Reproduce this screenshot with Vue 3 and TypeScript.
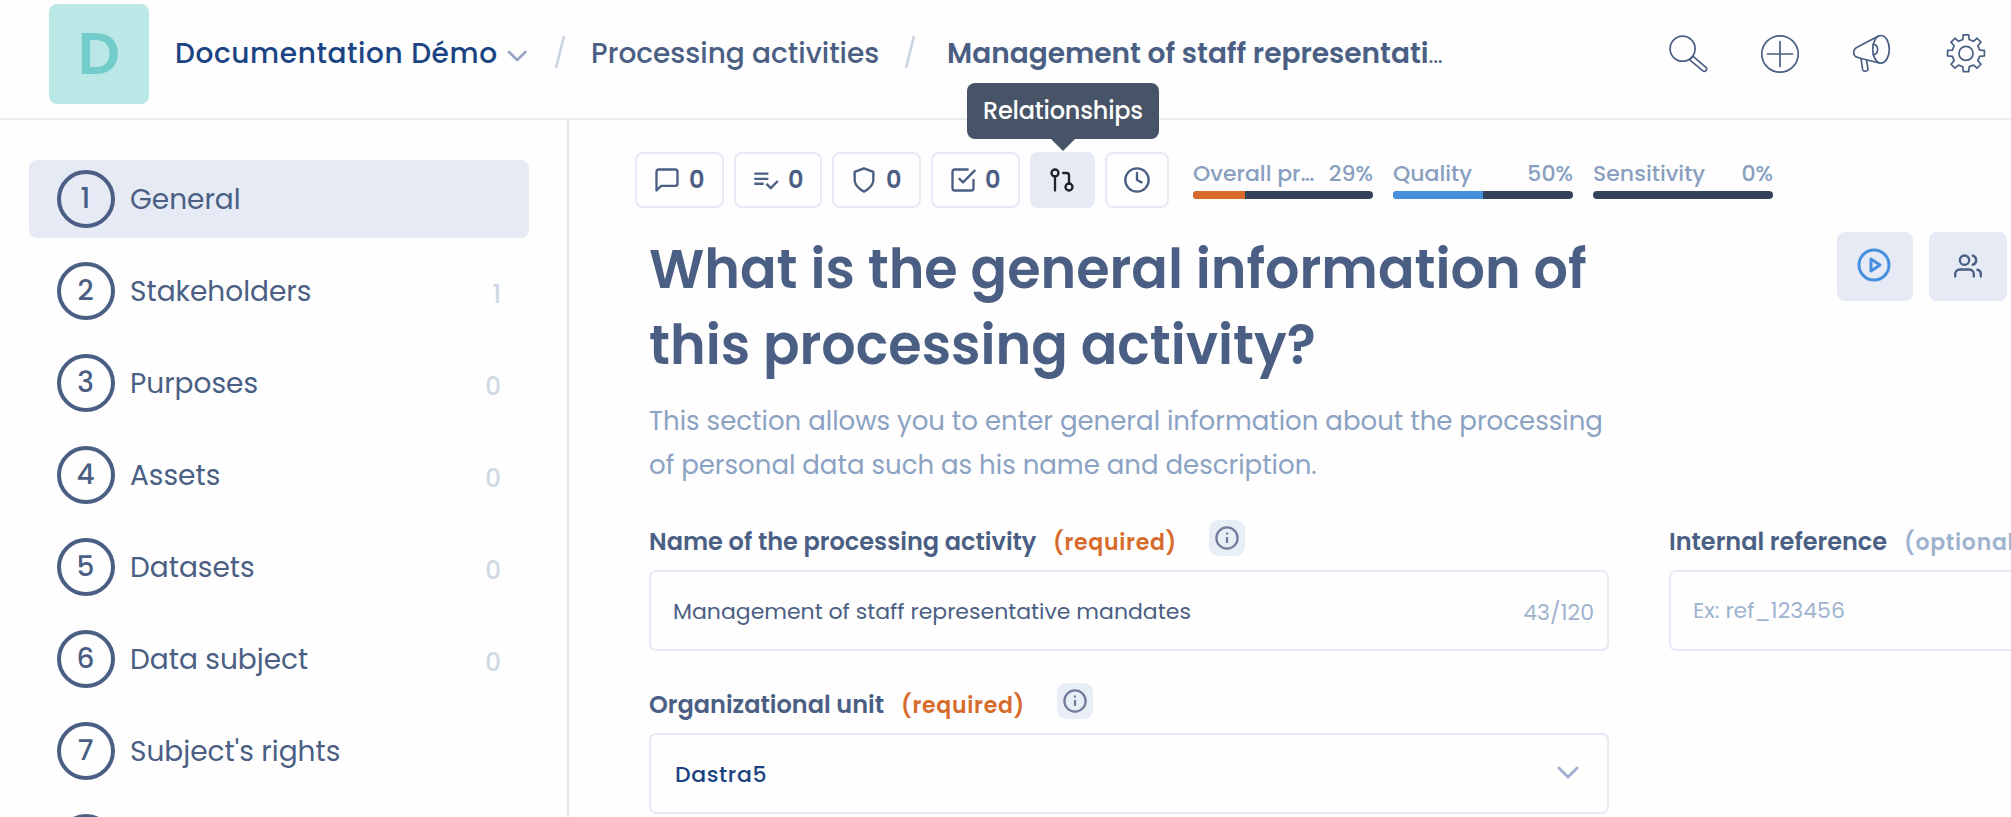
<script setup lang="ts">
interface Step {
  label: string
  count?: number
}

const steps: Step[] = [
  { label: 'General' },
  { label: 'Stakeholders', count: 1 },
  { label: 'Purposes', count: 0 },
  { label: 'Assets', count: 0 },
  { label: 'Datasets', count: 0 },
  { label: 'Data subject', count: 0 },
  { label: "Subject's rights" },
]

const meters = [
  { label: 'Overall pr', clipped: true, value: 29, color: '#d86b2b' },
  { label: 'Quality', clipped: false, value: 50, color: '#458fde' },
  { label: 'Sensitivity', clipped: false, value: 0, color: '#458fde' },
]

// Outline of an eight-toothed cog centred on (20, 19.2)
const cog = Array.from({ length: 8 }, (_, i) =>
  [[14, -13], [18.6, -8.5], [18.6, 8.5], [14, 13]].map(([r, a]) => {
    const t = ((i * 45 + a) * Math.PI) / 180
    return `${(20 + r * Math.sin(t)).toFixed(2)},${(19.2 - r * Math.cos(t)).toFixed(2)}`
  }).join(' '),
).join(' ')
</script>

<template>
  <div class="app">
    <header class="topbar">
      <div class="logo">D</div>
      <span class="crumb workspace">Documentation Démo</span>
      <svg class="caret" width="21" height="12" viewBox="0 0 21 12"><path d="M2 2l8.2 8 8.2-8" /></svg>
      <svg class="slash first" width="12" height="36" viewBox="0 0 12 36"><path d="M10 2L2 34" /></svg>
      <span class="crumb section">Processing activities</span>
      <svg class="slash second" width="12" height="36" viewBox="0 0 12 36"><path d="M10 2L2 34" /></svg>
      <span class="crumb current">Management of staff representati<span class="dots">...</span></span>
      <nav class="tools">
        <svg viewBox="0 0 40 40"><circle cx="14.6" cy="14.7" r="12.5" /><path d="M21.7 25.8l3.5-3.9M23.3 24l-1.6 1.8 13.2 11.1q1.7 1.1 3.1-.3 1.5-1.6-.1-3.2L25.1 22.3" /></svg>
        <svg viewBox="0 0 40 40"><circle cx="20" cy="20" r="18.2" /><path d="M20 7.5v25M7.5 20h25" /></svg>
        <svg viewBox="0 0 40 40"><ellipse cx="29" cy="15.3" rx="8.3" ry="13.8" /><path d="M26.5 2L6.5 12.5C3 14 1.7 16 1.7 18.5c0 3 1.8 4.7 4.8 5.2L27 29M21.3 10.3c5.7.4 5.7 10 0 10.4M9 24.4l1.6 11q.4 1.9 1.9 1.8l2.2-.4q1.5-.4 1.3-1.8l-1.5-9" /></svg>
        <svg class="gear" viewBox="0 0 40 40"><polygon :points="cog" /><circle cx="20" cy="19.4" r="7" /></svg>
      </nav>
    </header>

    <div class="body">
      <aside class="sidebar">
        <div v-for="(s, i) in steps" :key="s.label" class="step" :class="{ active: i === 0 }">
          <span class="number">{{ i + 1 }}</span>
          <span class="label">{{ s.label }}</span>
          <span v-if="s.count !== undefined" class="count">{{ s.count }}</span>
        </div>
        <div class="step"><span class="number"></span></div>
      </aside>

      <main class="main">
        <div class="toolbar">
          <button class="tool"><svg viewBox="0 0 24 24"><path d="M21 15a2 2 0 0 1-2 2H7l-4 4V5a2 2 0 0 1 2-2h14a2 2 0 0 1 2 2z" /></svg>0</button>
          <button class="tool narrow"><svg viewBox="0 0 24 24"><path class="butt" d="M2 6.5h12M2 11h12M2 15.2h8M12.3 15.3l3.8 3.7 6-6.1" /></svg>0</button>
          <button class="tool"><svg viewBox="0 0 24 24"><path d="M12 22s8-4 8-10V5l-8-3-8 3v7c0 6 8 10 8 10z" /></svg>0</button>
          <button class="tool"><svg viewBox="0 0 24 24"><path d="M9 11l3 3L22 4M21 12v7a2 2 0 0 1-2 2H5a2 2 0 0 1-2-2V5a2 2 0 0 1 2-2h11" /></svg>0</button>
          <button class="tool relations">
            <svg viewBox="0 0 24 24"><circle cx="18" cy="18" r="3" /><circle cx="6" cy="6" r="3" /><path d="M13 6h3a2 2 0 0 1 2 2v7M6 9v12" /></svg>
            <span class="tooltip">Relationships</span>
          </button>
          <button class="tool history"><svg viewBox="0 0 24 24"><circle cx="12" cy="12" r="10" /><path d="M12 6v6l4 2" /></svg></button>
          <div class="meters">
            <div v-for="m in meters" :key="m.label" class="meter">
              <div class="meter-text"><span>{{ m.label }}<span v-if="m.clipped" class="clip">...</span></span><span>{{ m.value }}%</span></div>
              <div class="track"><div class="fill" :style="{ width: m.value + '%', background: m.color }"></div></div>
            </div>
          </div>
        </div>

        <div class="intro">
          <h1>What is the general information of<br />this processing activity?</h1>
          <div class="actions">
            <button class="action play"><svg viewBox="0 0 24 24"><circle cx="12" cy="12" r="10" /><path d="M10 8l6 4-6 4z" /></svg></button>
            <button class="action people"><svg viewBox="0 0 24 24"><path d="M17 21v-2a4 4 0 0 0-4-4H5a4 4 0 0 0-4 4v2M23 21v-2a4 4 0 0 0-3-3.87M16 3.13a4 4 0 0 1 0 7.75" /><circle cx="9" cy="7" r="4" /></svg></button>
          </div>
        </div>
        <p class="lead">This section allows you to enter general information about the processing<br />of personal data such as his name and description.</p>

        <div class="fields">
          <div class="field">
            <div class="caption">
              <label class="name">Name of the processing activity</label><span class="required">(required)</span>
              <span class="info"><svg viewBox="0 0 24 24"><circle cx="12" cy="12" r="10.6" /><path d="M12 11v6M12 6.6v1.8" /></svg></span>
            </div>
            <div class="input"><span class="value">Management of staff representative mandates</span><span class="counter">43/120</span></div>
          </div>
          <div class="field">
            <div class="caption"><label class="ref">Internal reference</label><span class="optional">(optional)</span></div>
            <div class="input"><span class="placeholder">Ex: ref_123456</span></div>
          </div>
          <div class="field">
            <div class="caption">
              <label class="unit">Organizational unit</label><span class="required">(required)</span>
              <span class="info"><svg viewBox="0 0 24 24"><circle cx="12" cy="12" r="10.6" /><path d="M12 11v6M12 6.6v1.8" /></svg></span>
            </div>
            <div class="input select"><span class="choice">Dastra5</span><svg width="24" height="14" viewBox="0 0 24 14"><path d="M3 2l9 9 9-9" /></svg></div>
          </div>
        </div>
      </main>
    </div>
  </div>
</template>

<style>
body { margin: 0; background: #fefefe; overflow: hidden; }
</style>

<style scoped>
.app { width: 2011px; height: 817px; overflow: hidden; background: #fefefe; color: #4a5f83; font-family: Poppins, Inter, "Open Sans", sans-serif; white-space: nowrap; }
.app * { box-sizing: border-box; }
svg { fill: none; stroke: currentColor; stroke-width: 2; stroke-linecap: round; stroke-linejoin: round; flex: none; display: block; }
button { font: inherit; color: inherit; background: none; margin: 0; padding: 0; border: 0; }

.topbar { height: 120px; padding: 2px 25px 12px 49px; border-bottom: 2px solid #e9edf2; display: flex; align-items: center; }
.logo { width: 100px; height: 100px; border-radius: 8px; background: #bbe8e6; color: #72cccc; font-size: 59px; font-weight: 600; line-height: 99px; text-align: center; margin-right: 26px; flex: none; }
.crumb { font-size: 28px; line-height: 36px; flex: none; }
.workspace { width: 332px; color: #1b4483; font-weight: 500; letter-spacing: 0.6px; }
.caret { color: #94a6c0; stroke-width: 2.6; margin-top: 3px; }
.slash { color: #cbd5e1; stroke-width: 2.6; stroke-linecap: butt; margin-top: -4px; }
.slash.first { margin-left: 26px; }
.slash.second { margin-left: 23px; }
.section { margin-left: 25px; width: 290px; font-weight: 500; }
.current { margin-left: 31px; font-weight: 600; }
.dots { font-size: 20px; line-height: 1; font-weight: 500; letter-spacing: -0.2px; }
.tools { margin-left: auto; display: flex; gap: 52px; }
.tools svg { width: 40px; height: 40px; stroke-width: 1.7; }
.tools .gear { margin-left: 2px; }

.body { display: flex; height: 697px; }
.sidebar { width: 569px; border-right: 2px solid #e3e6eb; padding: 40px 38px 0 29px; flex: none; display: flex; flex-direction: column; gap: 14px; }
.step { height: 78px; border-radius: 8px; padding: 0 28px; display: flex; align-items: center; flex: none; }
.step.active { background: #e5eaf4; }
.number { width: 58px; height: 58px; padding-right: 1px; border: 4px solid #4a5f83; border-radius: 50%; font-size: 28px; font-weight: 500; line-height: 49px; text-align: center; }
.label { margin-left: 15px; font-size: 28px; line-height: 36px; padding-top: 1px; }
.count { margin-left: auto; font-size: 24.5px; font-weight: 500; line-height: 32px; padding-top: 7px; color: #cfd8e4; }

.main { flex: none; width: 1600px; padding: 32px 0 0 80px; }
.toolbar { display: flex; gap: 10px; margin-left: -14px; height: 56px; }
.tool { width: 89px; height: 56px; border: 2px solid #e5eaf4; border-radius: 8px; padding-left: 16px; display: flex; align-items: center; gap: 8px; font-size: 24px; font-weight: 600; line-height: 30px; position: relative; flex: none; }
.tool svg { width: 28px; height: 28px; }
.butt { stroke-linecap: butt; stroke-linejoin: miter; }
.narrow { width: 88px; }
.relations { width: 65px; background: #e5eaf4; color: #1f2328; }
.history { width: 64px; }
.tooltip { position: absolute; left: -65px; top: -71px; width: 192px; height: 56px; border-radius: 8px; background: #475366; color: #fff; font-size: 24px; font-weight: 500; letter-spacing: -0.2px; line-height: 55px; text-align: center; }
.tooltip::after { content: ""; position: absolute; left: 84px; top: 56px; border: 12px solid transparent; border-top-color: #475366; border-bottom: 0; }
.meters { display: flex; gap: 20px; margin-left: 14px; padding-top: 8px; }
.meter { width: 180px; }
.meter-text { display: flex; justify-content: space-between; font-size: 22px; font-weight: 500; line-height: 28px; color: #8a9fbf; margin-bottom: 3px; }
.clip { letter-spacing: -1px; }
.track { height: 8px; border-radius: 4px; background: #33425a; overflow: hidden; }
.fill { height: 8px; }

.intro { display: flex; margin-top: 23px; height: 152px; }
h1 { margin: 0; width: 1188px; font-size: 54px; line-height: 76px; font-weight: 600; }
.actions { display: flex; gap: 16px; padding-top: 1px; }
.action { width: 76px; height: 69px; border-radius: 8px; background: #e5eaf4; display: flex; justify-content: center; align-items: center; }
.play { color: #458fde; }
.play svg { width: 36px; height: 36px; margin: -3px 0 0 -2px; }
.people { width: 78px; }
.people svg { width: 28px; height: 28px; margin-top: -1px; }
.lead { margin: 16px 0 0; font-size: 26px; line-height: 44px; color: #8ba2c3; }

.fields { margin-top: 33px; display: grid; grid-template-columns: 960px 460px; column-gap: 60px; row-gap: 32px; }
.caption { height: 50px; display: flex; align-items: flex-start; line-height: 30px; }
label { margin-top: 7px; font-size: 24px; font-weight: 600; }
.name { width: 404px; }
.unit { width: 252px; }
.ref { width: 235px; }
.required, .optional { margin-top: 8px; width: 156px; font-size: 22px; font-weight: 600; letter-spacing: 0.72px; color: #d76b2c; }
.optional { color: #9fb3cf; }
.info { width: 36px; height: 36px; border-radius: 9px; background: #e8eef6; color: #767b9c; display: flex; align-items: center; justify-content: center; }
.info svg { width: 24px; height: 24px; stroke-width: 2.3; stroke-linecap: butt; }
.input { height: 81px; border: 2px solid #e5eaf4; border-radius: 7px; padding: 0 13px 0 22px; display: flex; align-items: center; justify-content: space-between; font-size: 22px; line-height: 30px; }
.value { padding-top: 2px; }
.counter { color: #a0b3ce; padding-top: 4px; }
.placeholder { color: #a0b3ce; padding-top: 1px; }
.choice { font-weight: 500; letter-spacing: 0.6px; color: #1b4280; padding: 2px 0 0 2px; }
.select svg { color: #9bb0cd; stroke-width: 2.8; margin-right: 14px; margin-top: -1px; }
</style>
